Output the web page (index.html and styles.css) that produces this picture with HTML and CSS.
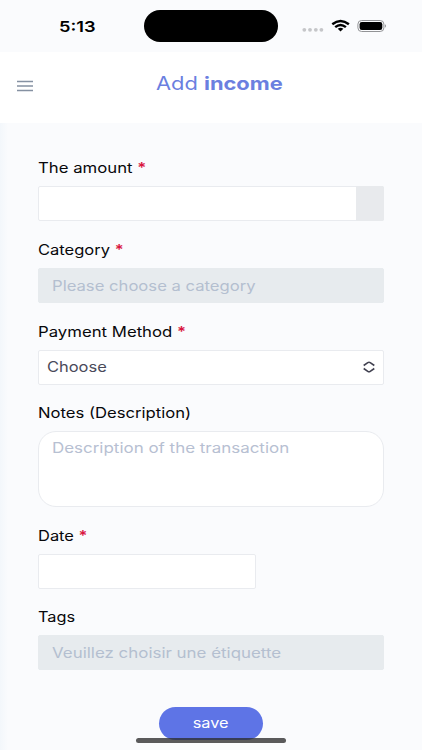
FILE: index.html
```
<!DOCTYPE html>
<html lang="en">
<head>
<meta charset="utf-8">
<title>Add income</title>
<link rel="stylesheet" href="styles.css">
</head>
<body>
<div class="status">
  <span class="time"><span class="wide clock">5:13</span></span>
  <span class="island"></span>
  <svg class="indicators" width="86" height="16" viewBox="0 0 86 16">
    <g fill="#c5c6c9"><circle cx="4.3" cy="11.8" r="1.9"/><circle cx="10" cy="11.8" r="1.9"/><circle cx="15.8" cy="11.8" r="1.9"/><circle cx="21.4" cy="11.8" r="1.9"/></g>
    <g fill="none" stroke="#000" stroke-width="2.4"><path d="M32.3 6.3Q40.5 -.3 48.9 6.3"/><path d="M35.2 9.2Q40.5 4.7 45.9 9.2"/></g>
    <path d="M37.7 10.7Q40.5 8.8 43.4 10.7L40.5 13.5Z"/>
    <rect x="57.9" y="2.5" width="26" height="11" rx="3.7" fill="#fafbfd" stroke="#929396"/>
    <rect x="59.6" y="4" width="22.7" height="8" rx="2.2"/>
    <path d="M85 6.3Q87 8 85 9.7Z" fill="#929396"/>
  </svg>
</div>
<header class="topbar">
  <svg class="menu" width="16" height="12" viewBox="0 0 16 12"><path d="M0 1.5H16M0 6H16M0 10.5H16" stroke="#8591a2" stroke-width="1.5"/></svg>
  <h1 class="title"><span class="wide">Add <b>income</b></span></h1>
</header>
<main class="form">
  <div class="group">
    <div class="label"><span class="wide amount">The amount <i>*</i></span></div>
    <div class="field split"><span class="addon"></span></div>
  </div>
  <div class="group">
    <div class="label"><span class="wide category">Category <i>*</i></span></div>
    <div class="field disabled"><span class="wide category-hint">Please choose a category</span></div>
  </div>
  <div class="group">
    <div class="label"><span class="wide payment">Payment Method <i>*</i></span></div>
    <div class="field select"><span class="wide choose">Choose</span>
      <svg width="12" height="12" viewBox="0 0 12 12"><path d="M.7 4.5L4.8 1.7Q6 .9 7.2 1.7L11.3 4.5M.7 7.5L4.8 10.3Q6 11.1 7.2 10.3L11.3 7.5" fill="none" stroke="#414150" stroke-width="1.6"/></svg>
    </div>
  </div>
  <div class="group">
    <div class="label"><span class="wide notes">Notes (Description)</span></div>
    <div class="field area"><span class="wide notes-hint">Description of the transaction</span></div>
  </div>
  <div class="group">
    <div class="label"><span class="wide date">Date <i>*</i></span></div>
    <div class="field short"></div>
  </div>
  <div class="group">
    <div class="label"><span class="wide tags">Tags</span></div>
    <div class="field disabled"><span class="wide tags-hint">Veuillez choisir une étiquette</span></div>
  </div>
  <div class="save"><span class="wide">save</span></div>
</main>
<div class="home"></div>
</body>
</html>
```
FILE: styles.css
```
* { box-sizing: border-box; }
body {
  margin: 0;
  width: 422px;
  height: 750px;
  overflow: hidden;
  position: relative;
  background: #fafbfd;
  color: #08080b;
  font: 14.2px/24px Inter, sans-serif;
}
.wide {
  display: inline-block;
  white-space: nowrap;
  transform: scaleX(1.15);
  transform-origin: left center;
}
.wide.clock { transform: scaleX(1.2); }
.wide.amount { transform: scaleX(1.18); }
.wide.category { transform: scaleX(1.165); }
.wide.payment { transform: scaleX(1.18); }
.wide.notes { transform: scaleX(1.173); }
.wide.date { transform: scaleX(1.16); }
.wide.choose { transform: scaleX(1.16); }
.wide.category-hint { transform: scaleX(1.173); }
.wide.notes-hint { transform: scaleX(1.194); }
.wide.tags-hint { transform: scaleX(1.191); }
.status {
  height: 52px;
  display: flex;
  align-items: flex-start;
}
.time {
  width: 144px;
  padding: 15px 0 0 58.5px;
  font-size: 15.2px;
  font-weight: 600;
  color: #000;
}
.island {
  width: 134px;
  height: 32px;
  margin-top: 10.4px;
  border-radius: 16px;
  background: #000;
}
.indicators { margin: 18px 0 0 22px; }
.topbar {
  height: 71px;
  display: flex;
  align-items: flex-start;
  background: #fff;
}
.menu { margin: 28px 0 0 17px; }
.title {
  margin: 19px 0 0 123px;
  font-size: 18.4px;
  font-weight: 400;
  color: #6b7fe0;
}
.title .wide { transform: scaleX(1.188); }
.title b { font-weight: 700; }
.form {
  height: 627px;
  padding: 33px 38px 0;
  background: linear-gradient(90deg, #f3f7fb, #fafbfd 8px);
}
.group { margin-bottom: 16.75px; }
.label { height: 30px; }
.label i { font-style: normal; font-weight: 600; color: #d9163f; }
.field {
  height: 35px;
  border: 1px solid #e9ebef;
  border-radius: 2px;
  background: #fff;
  display: flex;
  align-items: center;
}
.split { justify-content: flex-end; }
.addon {
  width: 28px;
  height: 35px;
  margin-right: -1px;
  border-radius: 0 2px 2px 0;
  background: #e8eaed;
}
.disabled {
  padding: 1px 0 0 13px;
  border-color: #e7ebee;
  background: #e7ebee;
  color: #b4bfd0;
}
.select {
  justify-content: space-between;
  padding: 0 8px;
  color: #4a4a5a;
}
.area {
  height: 75.5px;
  align-items: flex-start;
  padding: 4px 0 0 13px;
  border-radius: 18px;
  color: #b7c0d2;
}
.short { width: 218px; }
.save {
  width: 104px;
  height: 33.5px;
  margin: 36.5px auto 0;
  padding-top: 4px;
  border-radius: 17px;
  background: #5e74e6;
  color: #fff;
  text-align: center;
}
.save .wide { transform-origin: center; }
.home {
  position: absolute;
  left: 136px;
  top: 738px;
  width: 150px;
  height: 4.5px;
  border-radius: 3px;
  background: rgba(45, 45, 45, .78);
}
```
